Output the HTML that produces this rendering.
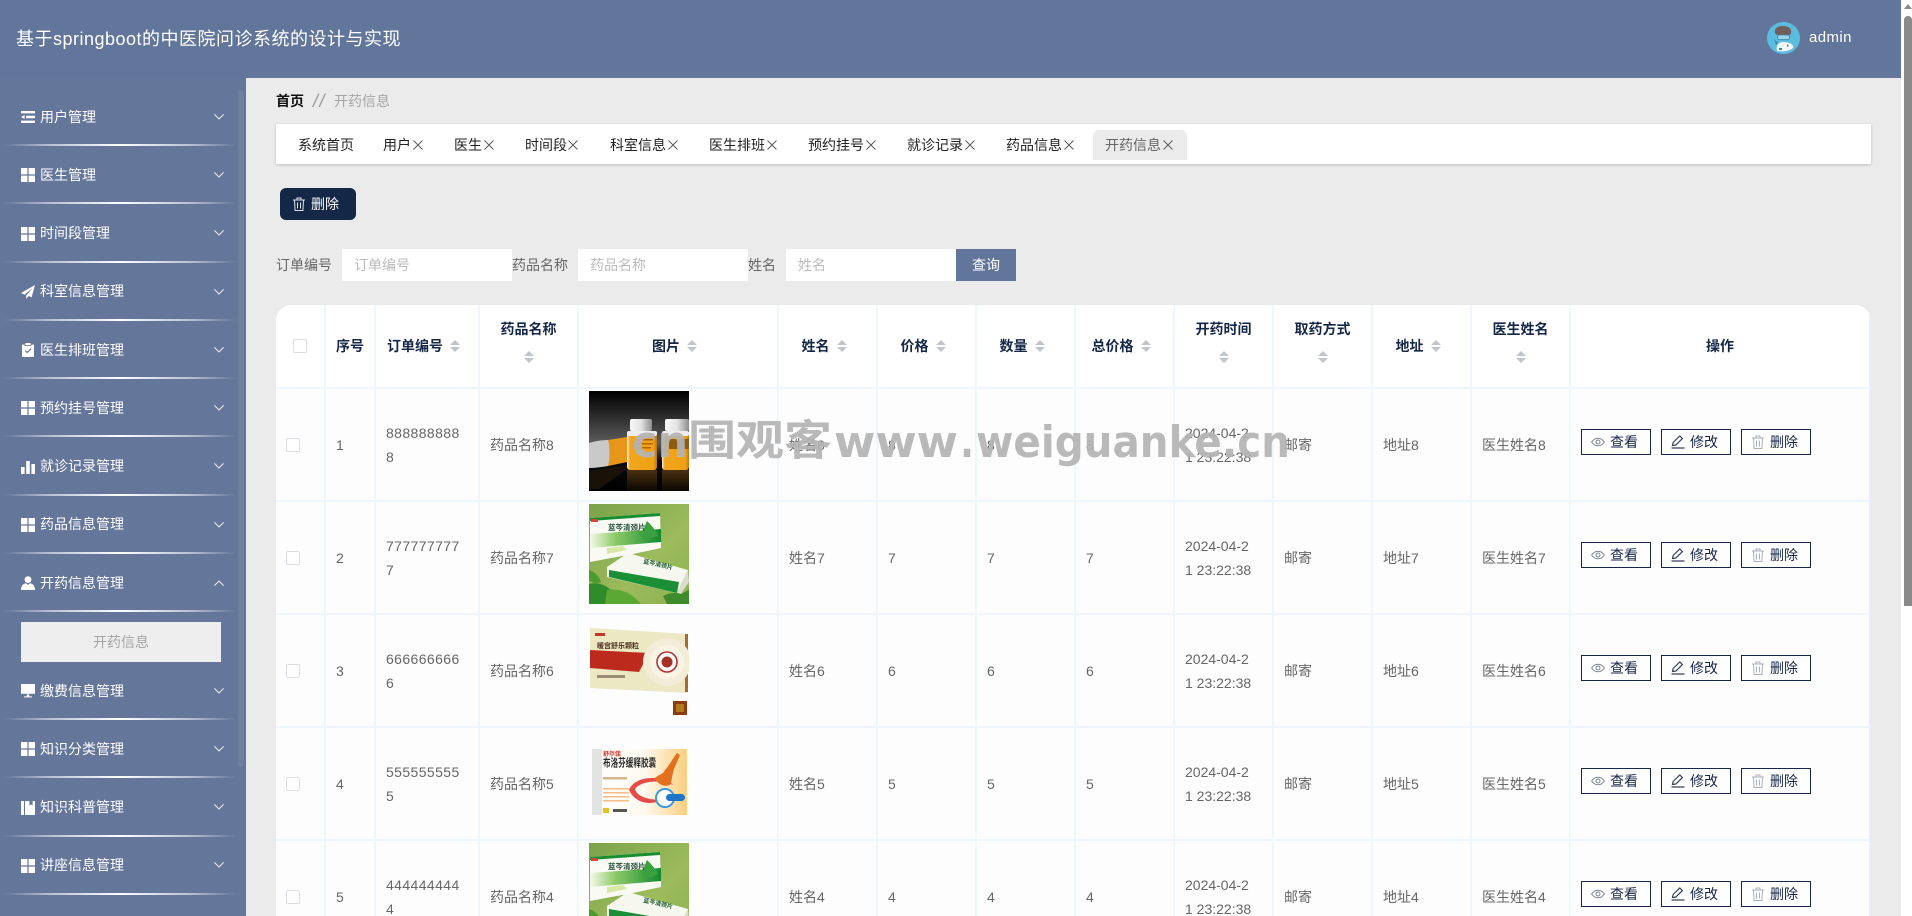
<!DOCTYPE html>
<html lang="zh-CN">
<head>
<meta charset="utf-8">
<title>开药信息</title>
<style>
*{box-sizing:border-box}
html,body{margin:0;padding:0;width:1912px;height:916px;overflow:hidden;background:#fff}
body{font-family:"Liberation Sans","Noto Sans CJK SC",sans-serif;font-size:14px;position:relative;color:#666}
.abs{position:absolute;white-space:nowrap}
#hd{left:0;top:0;width:1901px;height:78px;background:#62769c}
#sb{left:0;top:78px;width:246px;height:838px;background:#65769b}
#main{left:246px;top:78px;width:1655px;height:838px;background:#ebebeb}
.thumb{left:238px;top:90px;width:6px;height:677px;background:#6f7f9e;border-radius:3px}
.mi{position:absolute;left:40px;color:#fff;line-height:24px;height:24px;white-space:nowrap}
.ic{position:absolute;left:21px;width:14px;height:14px;fill:#fff}
.ch{position:absolute;left:214px;width:10px;height:6px;fill:none;stroke:#e6eaf2;stroke-width:1.1}
.dv{position:absolute;left:4px;width:232px;height:2px;background:linear-gradient(90deg,rgba(255,255,255,0),rgba(255,255,255,.55) 20%,#fff 50%,rgba(255,255,255,.55) 80%,rgba(255,255,255,0))}
.tab{position:absolute;top:133px;line-height:24px;color:#222;white-space:nowrap}
.tx{position:absolute;top:140px;width:10px;height:10px;fill:none;stroke:#555;stroke-width:.9}
.lb{position:absolute;top:253px;line-height:24px;color:#666;white-space:nowrap}
.in{position:absolute;top:249px;height:32px;width:170px;background:#fff;color:#bbb;line-height:32px;padding-left:12px;white-space:nowrap}
#tw{position:absolute;left:276px;top:305px;width:1595px;height:620px;overflow:hidden;border-radius:16px 16px 0 0}
table{border-collapse:separate;border-spacing:0;table-layout:fixed;width:1595px;background:#fdfdfd}
th,td{border-right:2px solid #eef6ff;border-bottom:2px solid #eef6ff;padding:0 10px;vertical-align:middle;overflow:visible;white-space:nowrap;text-align:left;font-weight:normal}
th{background:#fff;height:84px;color:#152747;font-weight:700;text-align:center;line-height:24px}
td{height:113px;line-height:24px;color:#666}
tr th:last-child,tr td:last-child{border-right:2px solid #e8effa}
.s{display:inline-block;position:relative;width:24px;height:12px;vertical-align:-1px}
.s:before,.s:after{content:"";position:absolute;left:7px;border-left:5px solid transparent;border-right:5px solid transparent}
.s:before{top:0;border-bottom:5px solid #c0c4cc}
.s:after{bottom:0;border-top:5px solid #c0c4cc}
.w{padding-bottom:12px}
.w b{display:block;font-weight:700;line-height:24px}
.w .s{display:block;margin:10px auto 0;width:10px}
.w .s:before,.w .s:after{left:0}
.cb{display:block;width:14px;height:14px;border:1px solid #dcdfe6;border-radius:2px;background:#fff}
.no{letter-spacing:.4px}
.im{padding:0 10px}
.im svg{display:block;width:100px;height:100px;margin-top:-7px}
.b{display:inline-block;position:relative;top:-3px;width:70px;height:26px;border:1px solid #152747;margin-right:10px;background:#fff;color:#152747;line-height:24px;padding-left:28px;vertical-align:middle;font-size:14px}
.b svg{position:absolute;left:9px;top:5px;width:14px;height:14px;fill:none;stroke:#7b8393;stroke-width:1}
.b.e svg{stroke:#33415a}
.b.d svg{stroke:#a9afbb}
#wm{position:absolute;left:0;top:0;width:1912px;height:916px;pointer-events:none}
#st{left:1901px;top:0;width:11px;height:916px;background:#fff}
</style>
</head>
<body>
<svg width="0" height="0" style="position:absolute">
<defs>
<symbol id="i-op" viewBox="0 0 14 14"><path d="M0 1h14v2.4H0zM5 5.800h9v2.400H5zM0 10.600h14V13H0zM0 7l3.600-2v4z"/></symbol>
<symbol id="i-gr" viewBox="0 0 14 14"><path d="M0 0h6.400v6.400H0zM7.600 0H14v6.400H7.600zM0 7.600h6.400V14H0zM7.600 7.600H14V14H7.600z"/></symbol>
<symbol id="i-pl" viewBox="0 0 14 14"><path d="M14 0L0 8l3.600 1.600L12 2.600 5.200 10.400V14l2.400-3 3 1.400z"/></symbol>
<symbol id="i-cl" viewBox="0 0 14 14"><path fill-rule="evenodd" d="M1 1.600h2.600V3h6.800V1.600H13V14H1zM4.400 0h5.200v2.200H4.400zM3.800 8l.8-.8 1.600 1.600 3.400-3.400.8.8-4.200 4.200z"/></symbol>
<symbol id="i-ba" viewBox="0 0 14 14"><path d="M0 7h3.600v7H0zM5.200 1h3.600v13H5.200zM10.400 4H14v10h-3.600z"/></symbol>
<symbol id="i-us" viewBox="0 0 14 14"><circle cx="7" cy="3.600" r="3.400"/><path d="M0 14c0-4 2-6.400 5-6.800L7 9l2-1.800c3 .4 5 2.800 5 6.800z"/></symbol>
<symbol id="i-mo" viewBox="0 0 14 14"><path d="M0 0h14v9.800H0zM3 12.400h8V13.400H3zM5.800 10.400h2.400v2H5.800z"/></symbol>
<symbol id="i-bk" viewBox="0 0 14 14"><path fill-rule="evenodd" d="M0 0h3v14H0zM4 0h4.400v4.600L10 3.400l1.600 1.200V0H14v14H4z"/></symbol>
<symbol id="ch-d" viewBox="0 0 10 6"><path d="M.4.4L5 5 9.600.4"/></symbol>
<symbol id="ch-u" viewBox="0 0 10 6"><path d="M.4 5.600L5 1l4.600 4.600"/></symbol>
<symbol id="xx" viewBox="0 0 10 10"><path d="M.5.5l9 9M9.500.5l-9 9"/></symbol>
<symbol id="eye" viewBox="0 0 14 14"><path d="M.6 7C2.400 4.400 4.600 3.200 7 3.200s4.600 1.200 6.400 3.800C11.600 9.600 9.400 10.800 7 10.800S2.400 9.600.6 7z"/><circle cx="7" cy="7" r="2"/></symbol>
<symbol id="ed" viewBox="0 0 14 14"><path d="M1.500 10.500l.6-3L8.800 1l2.600 2.600-6.600 6.400zM.5 13h13" stroke-width="1.200"/></symbol>
<symbol id="tr" viewBox="0 0 14 14"><path d="M1 3h12M5 3V1h4v2M2.500 3l.6 10.500h7.800L11.500 3M5.500 5.500v6M8.500 5.500v6"/></symbol>

<linearGradient id="g1" x1="0" y1="0" x2="0" y2="1"><stop offset="0" stop-color="#000"/><stop offset=".2" stop-color="#222"/><stop offset=".52" stop-color="#5c5c5c"/><stop offset=".7" stop-color="#0c0c0c"/><stop offset="1" stop-color="#000"/></linearGradient>
<linearGradient id="g1c" x1="0" y1="0" x2="1" y2="0"><stop offset="0" stop-color="#f7f7f7"/><stop offset=".5" stop-color="#e4e4e4"/><stop offset="1" stop-color="#8d8d8d"/></linearGradient>
<linearGradient id="g1o" x1="0" y1="0" x2="1" y2="0"><stop offset="0" stop-color="#efefef"/><stop offset=".1" stop-color="#f2a51c"/><stop offset=".88" stop-color="#f0a114"/><stop offset="1" stop-color="#b8760c"/></linearGradient>
<linearGradient id="g1r" x1="0" y1="0" x2="0" y2="1"><stop offset="0" stop-color="#4a3010"/><stop offset="1" stop-color="#0a0703"/></linearGradient>
<linearGradient id="g2" x1="0" y1="0" x2="1" y2="1"><stop offset="0" stop-color="#7ba24a"/><stop offset=".6" stop-color="#9cbc5c"/><stop offset="1" stop-color="#8db050"/></linearGradient>
<linearGradient id="g2g" x1="0" y1="0" x2="1" y2="0"><stop offset="0" stop-color="#f4fae6"/><stop offset=".35" stop-color="#8fcb6a"/><stop offset="1" stop-color="#138a2e"/></linearGradient>
<linearGradient id="g4" x1="0" y1="0" x2="1" y2="0"><stop offset="0" stop-color="#fff"/><stop offset=".55" stop-color="#fffaf0"/><stop offset="1" stop-color="#fbcf80"/></linearGradient>

<symbol id="p1" viewBox="0 0 100 100">
<rect width="100" height="100" fill="url(#g1)"/>
<path d="M19 49L38 46V71L19 75z" fill="#e8961a"/>
<path d="M0 52c6-2 14-3 19-3 2 8 2 18 0 26-6 1-13 2-19 2z" fill="#c9c9c9"/>
<path d="M0 80L38 74V78L10 98H0z" fill="#1a1208"/>
<rect x="41" y="28" width="22" height="12" rx="2" fill="url(#g1c)"/><rect x="38" y="40" width="30" height="39" rx="3" fill="url(#g1o)"/>
<rect x="76" y="28" width="24" height="12" rx="2" fill="url(#g1c)"/><rect x="73" y="40" width="27" height="39" rx="3" fill="url(#g1o)"/>
<rect x="38" y="40" width="30" height="5" rx="2" fill="#ededed"/><rect x="73" y="40" width="27" height="5" rx="2" fill="#ededed"/>
<rect x="46" y="48" width="18" height="1.500" fill="#a85c10"/><rect x="46" y="52" width="18" height="1.500" fill="#b8640f"/><rect x="46" y="56" width="16" height="1.500" fill="#b8640f"/><rect x="80" y="48" width="20" height="10" fill="#8f5a12"/>
<rect x="38" y="79" width="30" height="21" fill="url(#g1r)"/><rect x="73" y="79" width="27" height="21" fill="url(#g1r)"/>
</symbol>

<symbol id="p2" viewBox="0 0 100 100">
<rect width="100" height="100" fill="url(#g2)"/>
<path d="M1 14L71 9 72 44 44 50 1 58z" fill="#fafaf5"/>
<path d="M1 30L72 25V38L1 44z" fill="url(#g2g)"/>
<path d="M1 14L71 9V12L1 17z" fill="#178f30"/>
<path d="M58 17c4 4 8 8 11 14-6 4-12 4-16 2 1-6 3-12 5-16z" fill="#3aa040"/>
<rect x="2" y="15" width="7" height="3" fill="#d9443a"/>
<text x="19" y="26" font-size="7.500" font-weight="700" fill="#26543a" font-family="Noto Sans CJK SC">蓝芩清颈片</text>
<path d="M18 44l16-2 4 4-20 4z" fill="#d6e8a6"/>
<path d="M18 63L39 49 99 66 88 89 18 73z" fill="#f6f7ef"/>
<path d="M20 66L90 78 88 89 20 73z" fill="#1b8f36"/>
<path d="M88 89L99 66 100 78 92 90z" fill="#d8dccb"/>
<text x="54" y="59" font-size="6" font-weight="700" fill="#1d5d2d" transform="rotate(13 54 59)" font-family="Noto Sans CJK SC">蓝芩清颈片</text>
<path d="M0 66c6 2 10 6 12 12-5 2-9 1-12-2z" fill="#4d9a2e"/>
<path d="M0 80c12-3 24 3 30 20H0z" fill="#2f8a2a"/>
<path d="M18 86c12-2 24 2 34 14H16z" fill="#5ca834"/>
<path d="M74 92c6-3 12-4 18-2l8-4v14H78z" fill="#3c8d2a"/>
</symbol>

<symbol id="p3" viewBox="0 0 100 100">
<rect width="100" height="100" fill="#fdfdfd"/>
<path d="M1 11L98 17 99 76 1 71z" fill="#ece8c3"/>
<path d="M1 33L60 36 50 55 1 51z" fill="#bc2a1e"/>
<path d="M96 17h3v58h-3z" fill="#a56a2c"/>
<circle cx="78" cy="45" r="24" fill="#f3ecd6"/><circle cx="78" cy="45" r="17" fill="#f9f4e6"/><circle cx="78" cy="45" r="10" fill="#fff" stroke="#b0332a" stroke-width="1.600"/><circle cx="78" cy="45" r="5.500" fill="#a53024"/>
<text x="8" y="31" font-size="7" font-weight="700" fill="#4a2a1a" font-family="Noto Sans CJK SC">暖宫舒乐颗粒</text>
<rect x="8" y="58" width="28" height="3" fill="#9a8c72"/><rect x="6" y="16" width="10" height="3" fill="#c0392b"/>
<rect x="84" y="84" width="14" height="14" fill="#8c3a12"/><rect x="87" y="87" width="8" height="8" fill="#b37a1c"/>
</symbol>

<symbol id="p4" viewBox="0 0 100 100">
<rect width="100" height="100" fill="#fdfdfd"/>
<rect x="3" y="19" width="95" height="66" fill="url(#g4)"/>
<rect x="3" y="19" width="10" height="66" fill="#e2e4e2"/>
<text x="14" y="26" font-size="6" font-weight="700" fill="#d0281c" font-family="Noto Sans CJK SC">舒尔佳</text>
<text x="14" y="26" font-size="7.600" font-weight="700" fill="#2a2a2a" font-family="Noto Sans CJK SC" transform="scale(1 1.400)">布洛芬缓释胶囊</text>
<rect x="14" y="47" width="24" height="2.500" fill="#d3b58a"/><rect x="14" y="58" width="26" height="1.500" fill="#f3bc88"/><rect x="14" y="62" width="26" height="1.500" fill="#f3bc88"/><rect x="14" y="66" width="26" height="1.500" fill="#f3bc88"/><rect x="14" y="70" width="26" height="1.500" fill="#f3bc88"/>
<path d="M40 60c4-10 18-14 32-11 6 1 10 3 12 6-14-6-32-4-38 4 2 8 14 11 28 11-14 6-28 3-34-10z" fill="#e84a4a"/>
<path d="M66 48c4-4 8-3 10-8 4-4 8-12 12-17l3 2-6 14c-2 6-2 12-4 16-6 2-12 0-15-7z" fill="#e4701e"/>
<circle cx="76" cy="68" r="9" fill="#fff" stroke="#3b9be0" stroke-width="2"/>
<rect x="77" y="64" width="19" height="7" rx="3.500" fill="#1e74c6"/>
<rect x="14" y="78" width="6" height="5" fill="#e7c020"/><rect x="24" y="79" width="14" height="3" fill="#555"/>
</symbol>
</defs>
</svg>

<div class="abs" id="hd"></div>
<div class="abs" style="left:16px;top:24px;font-size:18px;line-height:30px;color:#fff;letter-spacing:.5px">基于springboot的中医院问诊系统的设计与实现</div>
<svg class="abs" style="left:1767px;top:22px" width="33" height="32" viewBox="0 0 33 32">
<ellipse cx="16.500" cy="16" rx="16.500" ry="16" fill="#5bbcdf"/>
<path d="M8 11c-1-5 3-7 8-7s9 2 8 7c-1 3-2 2-3 2H11c-1 0-2 0-3-2z" fill="#71605a"/>
<rect x="10.500" y="13" width="12" height="4.500" rx="2" fill="#9ad6ea" stroke="#3d86a8" stroke-width=".8"/>
<path d="M10 29c-1-4 0-8 5-9h3c6 1 9 3 8 6-3 3-9 4-16 3z" fill="#f4f8fa"/>
<path d="M7 17l4 4-2 2zM12 26h3v2h-3zM20 22l2 2-2 1z" fill="#3d86a8"/>
</svg>
<div class="abs" style="left:1809px;top:26px;font-size:15px;line-height:24px;color:#fff;letter-spacing:.4px">admin</div>

<div class="abs" id="sb"></div>
<div class="abs thumb"></div>

<svg class="ic" style="top:110px"><use href="#i-op"/></svg><div class="mi" style="top:105px">用户管理</div><svg class="ch" style="top:114px"><use href="#ch-d"/></svg><div class="dv" style="top:144px"></div>
<svg class="ic" style="top:168px"><use href="#i-gr"/></svg><div class="mi" style="top:163px">医生管理</div><svg class="ch" style="top:172px"><use href="#ch-d"/></svg><div class="dv" style="top:202px"></div>
<svg class="ic" style="top:227px"><use href="#i-gr"/></svg><div class="mi" style="top:221px">时间段管理</div><svg class="ch" style="top:230px"><use href="#ch-d"/></svg><div class="dv" style="top:261px"></div>
<svg class="ic" style="top:285px"><use href="#i-pl"/></svg><div class="mi" style="top:279px">科室信息管理</div><svg class="ch" style="top:289px"><use href="#ch-d"/></svg><div class="dv" style="top:319px"></div>
<svg class="ic" style="top:343px"><use href="#i-cl"/></svg><div class="mi" style="top:338px">医生排班管理</div><svg class="ch" style="top:347px"><use href="#ch-d"/></svg><div class="dv" style="top:377px"></div>
<svg class="ic" style="top:401px"><use href="#i-gr"/></svg><div class="mi" style="top:396px">预约挂号管理</div><svg class="ch" style="top:405px"><use href="#ch-d"/></svg><div class="dv" style="top:435px"></div>
<svg class="ic" style="top:460px"><use href="#i-ba"/></svg><div class="mi" style="top:454px">就诊记录管理</div><svg class="ch" style="top:463px"><use href="#ch-d"/></svg><div class="dv" style="top:494px"></div>
<svg class="ic" style="top:518px"><use href="#i-gr"/></svg><div class="mi" style="top:512px">药品信息管理</div><svg class="ch" style="top:522px"><use href="#ch-d"/></svg><div class="dv" style="top:552px"></div>
<svg class="ic" style="top:576px"><use href="#i-us"/></svg><div class="mi" style="top:571px">开药信息管理</div><svg class="ch" style="top:580px"><use href="#ch-u"/></svg><div class="dv" style="top:610px"></div>
<div class="abs" style="left:21px;top:622px;width:200px;height:40px;background:#eee;color:#a5a5a5;text-align:center;line-height:40px">开药信息</div>
<svg class="ic" style="top:684px"><use href="#i-mo"/></svg><div class="mi" style="top:679px">缴费信息管理</div><svg class="ch" style="top:688px"><use href="#ch-d"/></svg><div class="dv" style="top:718px"></div>
<svg class="ic" style="top:742px"><use href="#i-gr"/></svg><div class="mi" style="top:737px">知识分类管理</div><svg class="ch" style="top:746px"><use href="#ch-d"/></svg><div class="dv" style="top:776px"></div>
<svg class="ic" style="top:801px"><use href="#i-bk"/></svg><div class="mi" style="top:795px">知识科普管理</div><svg class="ch" style="top:804px"><use href="#ch-d"/></svg><div class="dv" style="top:835px"></div>
<svg class="ic" style="top:859px"><use href="#i-gr"/></svg><div class="mi" style="top:853px">讲座信息管理</div><svg class="ch" style="top:862px"><use href="#ch-d"/></svg><div class="dv" style="top:893px"></div>

<div class="abs" id="main"></div>

<div class="abs" style="left:276px;top:89px;line-height:24px;font-weight:700;color:#111">首页</div>
<div class="abs" style="left:313px;top:89px;line-height:24px;color:#9a9a9a;font-style:italic;font-size:18px;letter-spacing:1.500px">//</div>
<div class="abs" style="left:334px;top:89px;line-height:24px;color:#a5a5a5">开药信息</div>

<div class="abs" style="left:276px;top:124px;width:1595px;height:40px;background:#fff;box-shadow:0 1px 3px rgba(0,0,0,.18)"></div>
<div class="abs" style="left:1093px;top:130px;width:94px;height:30px;background:#ebebeb;border-radius:6px 6px 0 0"></div>
<div class="tab" style="left:298px">系统首页</div>
<div class="tab" style="left:383px">用户</div><svg class="tx" style="left:413px"><use href="#xx"/></svg>
<div class="tab" style="left:454px">医生</div><svg class="tx" style="left:484px"><use href="#xx"/></svg>
<div class="tab" style="left:525px">时间段</div><svg class="tx" style="left:568px"><use href="#xx"/></svg>
<div class="tab" style="left:610px">科室信息</div><svg class="tx" style="left:668px"><use href="#xx"/></svg>
<div class="tab" style="left:709px">医生排班</div><svg class="tx" style="left:767px"><use href="#xx"/></svg>
<div class="tab" style="left:808px">预约挂号</div><svg class="tx" style="left:866px"><use href="#xx"/></svg>
<div class="tab" style="left:907px">就诊记录</div><svg class="tx" style="left:965px"><use href="#xx"/></svg>
<div class="tab" style="left:1006px">药品信息</div><svg class="tx" style="left:1064px"><use href="#xx"/></svg>
<div class="tab" style="left:1105px;color:#666">开药信息</div><svg class="tx" style="left:1163px"><use href="#xx"/></svg>

<div class="abs" style="left:280px;top:188px;width:76px;height:32px;background:#152747;border-radius:6px"></div>
<svg class="abs" style="left:292px;top:197px;fill:none;stroke:#dfe6ee;stroke-width:1" width="14" height="14"><use href="#tr"/></svg>
<div class="abs" style="left:311px;top:192px;line-height:24px;color:#fff">删除</div>

<div class="lb" style="left:276px">订单编号</div><div class="in" style="left:342px">订单编号</div>
<div class="lb" style="left:512px">药品名称</div><div class="in" style="left:578px">药品名称</div>
<div class="lb" style="left:748px">姓名</div><div class="in" style="left:786px">姓名</div>
<div class="abs" style="left:956px;top:249px;width:60px;height:32px;background:#62769c;color:#fff;text-align:center;line-height:32px">查询</div>

<div id="tw">
<table>
<colgroup><col style="width:50px"><col style="width:50px"><col style="width:104px"><col style="width:99px"><col style="width:200px"><col style="width:99px"><col style="width:99px"><col style="width:99px"><col style="width:99px"><col style="width:99px"><col style="width:99px"><col style="width:99px"><col style="width:99px"><col style="width:300px"></colgroup>
<tr>
<th><i class="cb" style="margin:0 auto"></i></th>
<th>序号</th>
<th>订单编号<i class="s"></i></th>
<th class="w"><b>药品名称</b><i class="s"></i></th>
<th>图片<i class="s"></i></th>
<th>姓名<i class="s"></i></th>
<th>价格<i class="s"></i></th>
<th>数量<i class="s"></i></th>
<th>总价格<i class="s"></i></th>
<th class="w"><b>开药时间</b><i class="s"></i></th>
<th class="w"><b>取药方式</b><i class="s"></i></th>
<th>地址<i class="s"></i></th>
<th class="w"><b>医生姓名</b><i class="s"></i></th>
<th>操作</th>
</tr>
<tr><td><i class="cb"></i></td><td>1</td><td class="no">888888888<br>8</td><td>药品名称8</td><td class="im"><svg><use href="#p1"/></svg></td><td>姓名8</td><td>8</td><td>8</td><td>8</td><td>2024-04-2<br>1 23:22:38</td><td>邮寄</td><td>地址8</td><td>医生姓名8</td><td><span class="b"><svg><use href="#eye"/></svg>查看</span><span class="b e"><svg><use href="#ed"/></svg>修改</span><span class="b d"><svg><use href="#tr"/></svg>删除</span></td></tr>
<tr><td><i class="cb"></i></td><td>2</td><td class="no">777777777<br>7</td><td>药品名称7</td><td class="im"><svg><use href="#p2"/></svg></td><td>姓名7</td><td>7</td><td>7</td><td>7</td><td>2024-04-2<br>1 23:22:38</td><td>邮寄</td><td>地址7</td><td>医生姓名7</td><td><span class="b"><svg><use href="#eye"/></svg>查看</span><span class="b e"><svg><use href="#ed"/></svg>修改</span><span class="b d"><svg><use href="#tr"/></svg>删除</span></td></tr>
<tr><td><i class="cb"></i></td><td>3</td><td class="no">666666666<br>6</td><td>药品名称6</td><td class="im"><svg><use href="#p3"/></svg></td><td>姓名6</td><td>6</td><td>6</td><td>6</td><td>2024-04-2<br>1 23:22:38</td><td>邮寄</td><td>地址6</td><td>医生姓名6</td><td><span class="b"><svg><use href="#eye"/></svg>查看</span><span class="b e"><svg><use href="#ed"/></svg>修改</span><span class="b d"><svg><use href="#tr"/></svg>删除</span></td></tr>
<tr><td><i class="cb"></i></td><td>4</td><td class="no">555555555<br>5</td><td>药品名称5</td><td class="im"><svg><use href="#p4"/></svg></td><td>姓名5</td><td>5</td><td>5</td><td>5</td><td>2024-04-2<br>1 23:22:38</td><td>邮寄</td><td>地址5</td><td>医生姓名5</td><td><span class="b"><svg><use href="#eye"/></svg>查看</span><span class="b e"><svg><use href="#ed"/></svg>修改</span><span class="b d"><svg><use href="#tr"/></svg>删除</span></td></tr>
<tr><td><i class="cb"></i></td><td>5</td><td class="no">444444444<br>4</td><td>药品名称4</td><td class="im"><svg><use href="#p2"/></svg></td><td>姓名4</td><td>4</td><td>4</td><td>4</td><td>2024-04-2<br>1 23:22:38</td><td>邮寄</td><td>地址4</td><td>医生姓名4</td><td><span class="b"><svg><use href="#eye"/></svg>查看</span><span class="b e"><svg><use href="#ed"/></svg>修改</span><span class="b d"><svg><use href="#tr"/></svg>删除</span></td></tr>
</table>
</div>

<svg id="wm" viewBox="0 0 1912 916">
<g fill="#b4b4b4" fill-opacity=".93" font-weight="700">
<text x="632" y="457" font-size="44" font-family="DejaVu Sans" textLength="56" lengthAdjust="spacingAndGlyphs">cn</text>
<text x="688" y="455" font-size="42" font-family="Noto Sans CJK SC" textLength="144" lengthAdjust="spacingAndGlyphs">围观客</text>
<text x="834" y="457" font-size="44" font-family="DejaVu Sans" textLength="124" lengthAdjust="spacingAndGlyphs">www</text>
<text x="960" y="457" font-size="44" font-family="DejaVu Sans" textLength="14" lengthAdjust="spacingAndGlyphs">.</text>
<text x="976" y="457" font-size="44" font-family="DejaVu Sans" textLength="314" lengthAdjust="spacingAndGlyphs">weiguanke.cn</text>
</g>
</svg>

<div class="abs" id="st"></div>
<svg class="abs" style="left:1904px;top:4px" width="8" height="5"><path d="M0 5L4 0l4 5z" fill="#8a8a8a"/></svg>
<div class="abs" style="left:1904px;top:16px;width:8px;height:590px;background:#8a8a8a;border-radius:4px 4px 0 0"></div>
</body>
</html>
